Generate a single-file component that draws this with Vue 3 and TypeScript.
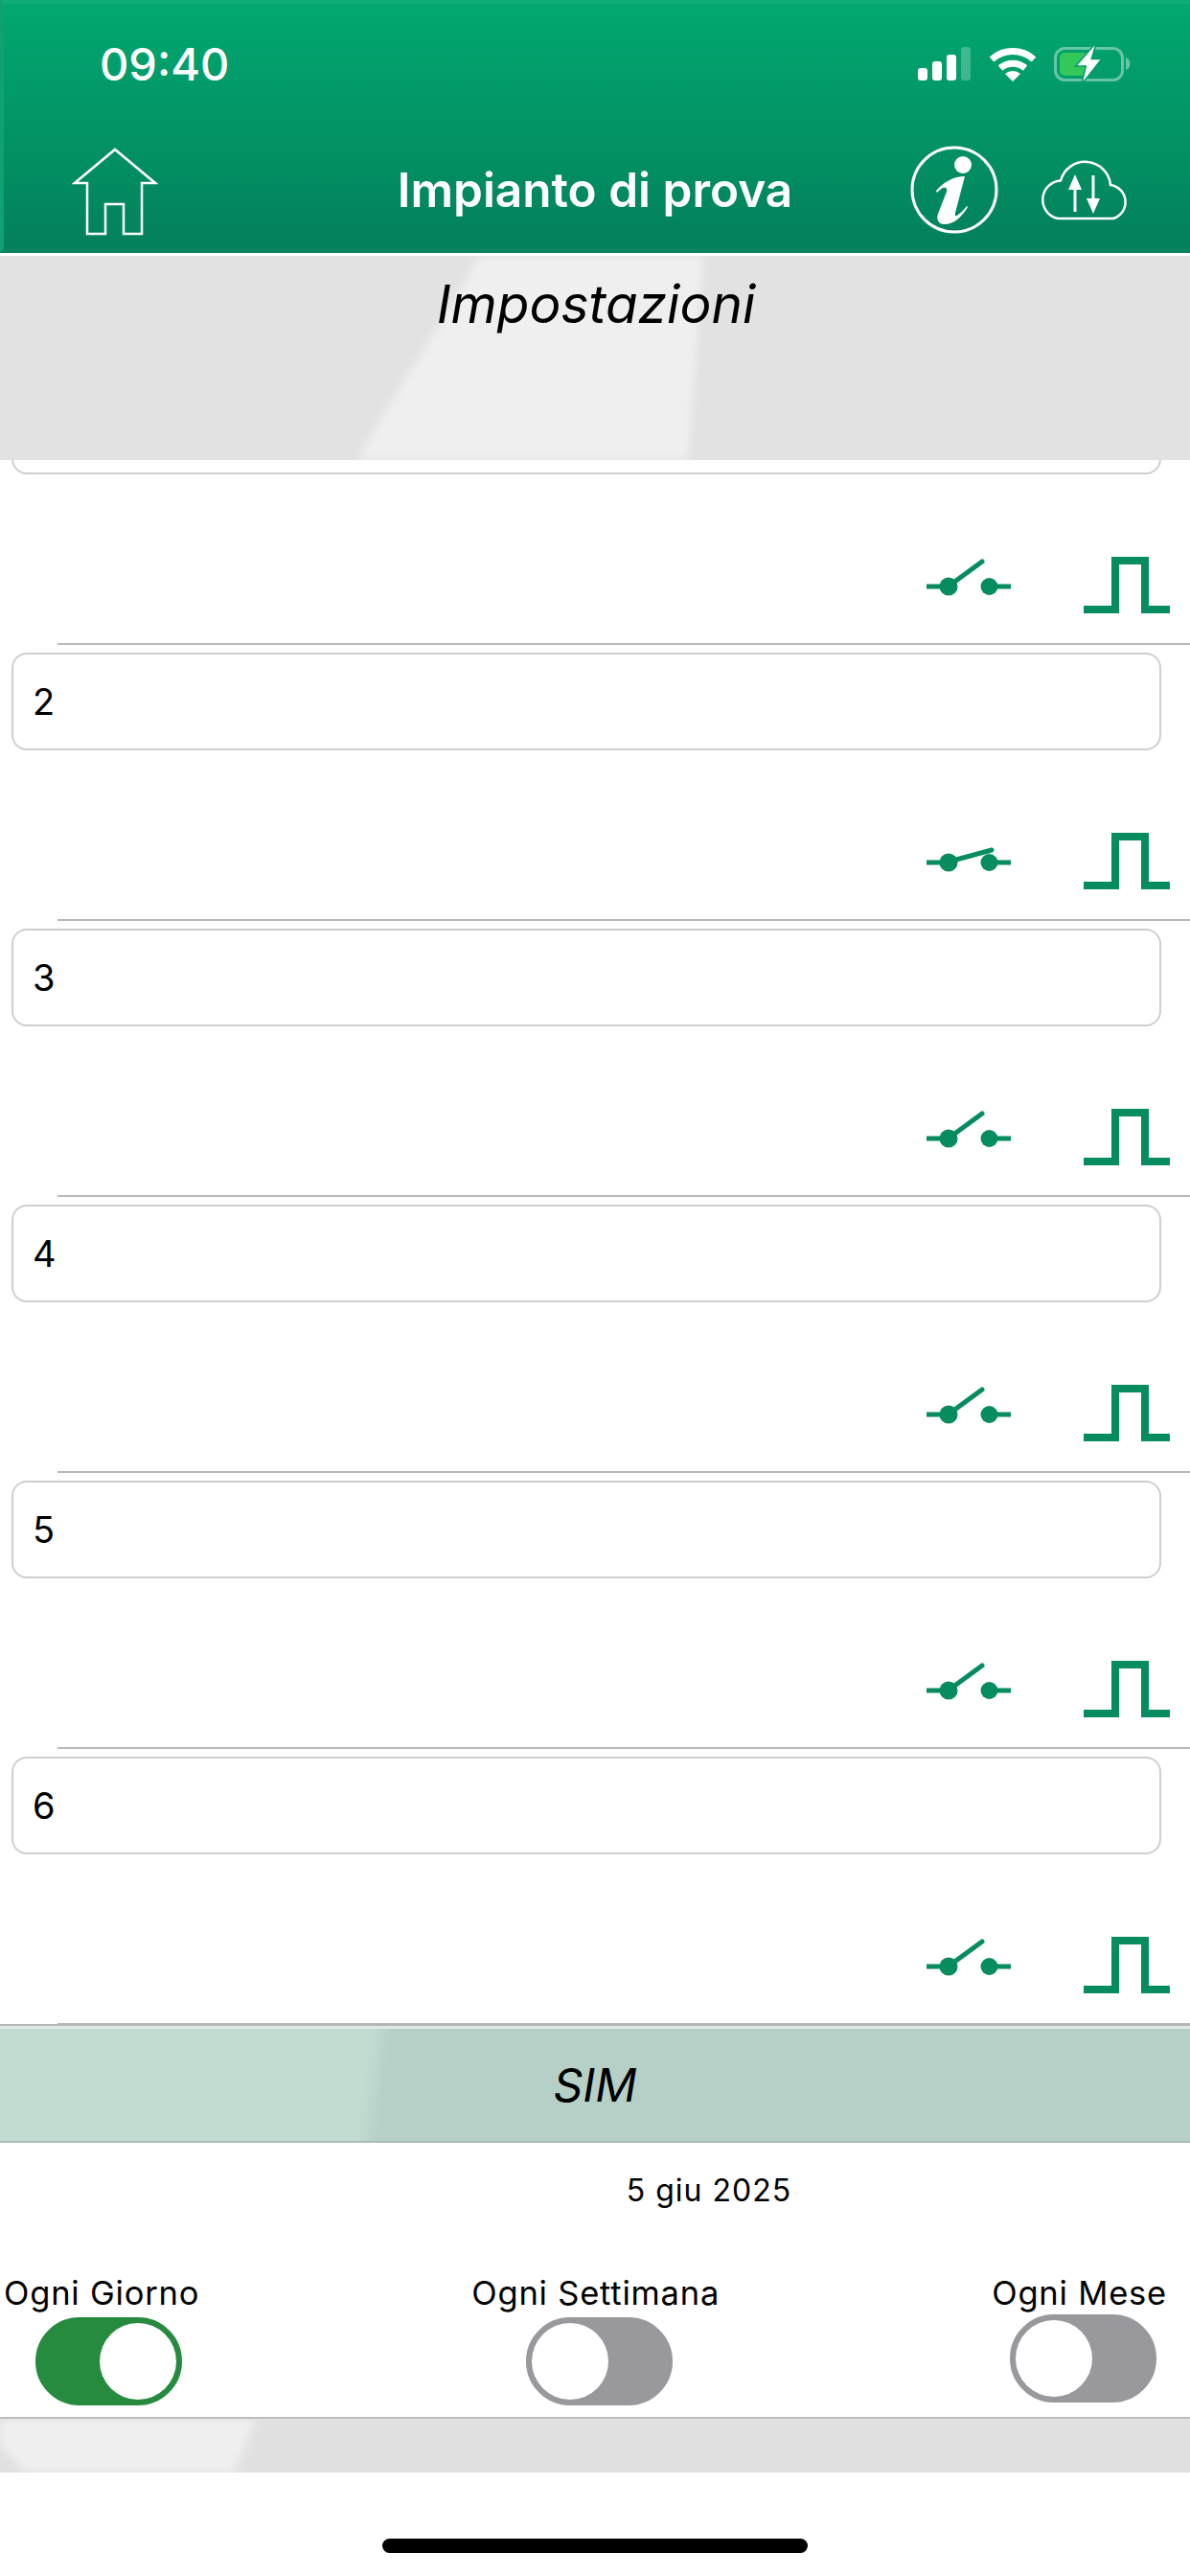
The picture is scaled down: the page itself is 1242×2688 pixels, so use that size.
<template>
  <div class="screen">
    <header class="topbar">
      <div class="status">
        <span class="clock">09:40</span>
        <svg class="status-icons" width="225" height="42" viewBox="0 0 225 42">
          <rect x="0" y="25" width="10" height="13" rx="3" fill="#fff" />
          <rect x="15" y="18" width="10" height="20" rx="3" fill="#fff" />
          <rect x="30" y="11" width="10" height="27" rx="3" fill="#fff" />
          <rect x="45" y="3" width="10" height="35" rx="3" fill="#fff" opacity="0.25" />
          <path d="M77 16a33 33 0 0 1 44 0" fill="none" stroke="#fff" stroke-width="7" />
          <path d="M86 25a20 20 0 0 1 26 0" fill="none" stroke="#fff" stroke-width="7" />
          <path d="M91 31a12 12 0 0 1 16 0l-8 8z" fill="#fff" />
          <rect x="143.500" y="4.500" width="70" height="33" rx="10" fill="none" stroke="#fff" stroke-opacity="0.4" stroke-width="3" />
          <path d="M217 14a7 7 0 0 1 0 13z" fill="#fff" opacity="0.4" />
          <rect x="148" y="9" width="30" height="24" rx="5" fill="#34c759" />
          <path d="M184.700 1.300 166.300 22.300h10l-4 16.700 18-22.700h-10z" fill="#fff" stroke="#029c6c" stroke-width="3" paint-order="stroke" />
        </svg>
      </div>
      <nav class="navbar">
        <svg class="home" width="90" height="94" viewBox="0 0 90 94">
          <path d="M3 38 45 3l42 35H73v53H54V60H35v31H16V38z" fill="none" stroke="#fff" stroke-width="2.500" />
        </svg>
        <h1 class="plant">Impianto di prova</h1>
        <div class="nav-actions">
          <svg width="92" height="92" viewBox="0 0 92 92">
            <circle cx="46" cy="46" r="44" fill="none" stroke="#fff" stroke-width="3" />
            <circle cx="55" cy="20" r="9" fill="#fff" />
            <path d="M27 47C35 38 45 32 57 32L47 70C46 74 48 74 50 72 53 70 56 67 59 63L60 64C54 74 46 82 36 82 29 82 27 77 29 71L38 48C39 44 37 43 34 44 32 45 30 47 28 49Z" fill="#fff" />
          </svg>
          <svg width="98" height="64" viewBox="0 0 98 64">
            <path d="M20 62a20 20 0 0 1 3-39.500A26.500 26.500 0 0 1 75 27a18 18 0 0 1 3 35z" fill="none" stroke="#fff" stroke-width="2.500" />
            <path d="M38 55V28M57 17v29" stroke="#fff" stroke-width="3" />
            <path d="M31 32 38 16l7 16zM50 41h14l-7 16z" fill="#fff" />
          </svg>
        </div>
      </nav>
    </header>

    <section class="title-band">
      <div class="sheen sheen--title"></div>
      <h2 class="section-title">Impostazioni</h2>
    </section>

    <main class="list">
      <div class="rows">
        <article v-for="row in rows" :key="row.id" class="row">
          <div class="field">{{ row.label }}</div>
          <div class="row-icons">
            <svg width="90" height="60" viewBox="0 0 90 60">
              <path d="M0 31h15M73 31h15" stroke="#068c5f" stroke-width="5" />
              <circle cx="23" cy="31" r="9.500" fill="#068c5f" />
              <circle cx="65.500" cy="31" r="9" fill="#068c5f" />
              <path :d="row.closed ? 'M31 28 68 18' : 'M28 27 58 5'" stroke="#068c5f" stroke-width="5" stroke-linecap="round" />
            </svg>
            <svg width="90" height="60" viewBox="0 0 90 60">
              <path d="M0 55h33V4h31v51h26" fill="none" stroke="#068c5f" stroke-width="8" />
            </svg>
          </div>
        </article>
      </div>
    </main>

    <section class="sim-band">
      <h2 class="sim-title">SIM</h2>
    </section>

    <section class="schedule">
      <p class="date">5 giu 2025</p>
      <div class="toggles">
        <div v-for="item in toggles" :key="item.label" :class="['toggle-item', `toggle-item--${item.id}`]">
          <span class="toggle-label">{{ item.label }}</span>
          <span :class="['toggle', { 'is-on': item.on }]"><i class="knob"></i></span>
        </div>
      </div>
    </section>

    <footer class="footer-bar">
      <div class="sheen sheen--footer"></div>
    </footer>
    <div class="home-area"><span class="home-indicator"></span></div>
  </div>
</template>

<script setup lang="ts">
interface Row {
  id: number
  label: string
  closed: boolean
}

// the first row is scrolled under the title band, its number is out of view
const rows: Row[] = [
  { id: 1, label: '', closed: false },
  { id: 2, label: '2', closed: true },
  { id: 3, label: '3', closed: false },
  { id: 4, label: '4', closed: false },
  { id: 5, label: '5', closed: false },
  { id: 6, label: '6', closed: false }
]

const toggles = [
  { id: 'day', label: 'Ogni Giorno', on: true },
  { id: 'week', label: 'Ogni Settimana', on: false },
  { id: 'month', label: 'Ogni Mese', on: false }
]
</script>

<style>
html,
body {
  margin: 0;
  background: #fff;
}
</style>

<style scoped>
.screen {
  width: 1242px;
  height: 2688px;
  display: flex;
  flex-direction: column;
  overflow: hidden;
  background: #fff;
  font-family: Inter, "Liberation Sans", sans-serif;
  color: #000;
}

.topbar {
  height: 264px;
  box-sizing: border-box;
  border-top: 4px solid #10ac78;
  border-bottom: 5px solid #0a8361;
  border-left: 4px solid #0fa172;
  background: linear-gradient(#02a870, #03805c);
  color: #fff;
}

.status {
  height: 106px;
  display: flex;
  justify-content: space-between;
  padding: 42px 59px 0 100px;
  box-sizing: border-box;
}

.clock {
  font-size: 47px;
  line-height: 42px;
  font-weight: 500;
}

.navbar {
  display: flex;
  align-items: flex-start;
  padding: 43px 60px 0 71px;
  position: relative;
}

.home {
  display: block;
}

.plant {
  position: absolute;
  left: -4px;
  right: 0;
  top: 58px;
  margin: 0;
  text-align: center;
  font-size: 49.500px;
  font-weight: 600;
  line-height: 60px;
}

.nav-actions {
  margin-left: auto;
  display: flex;
  gap: 42px;
  align-items: center;
  margin-top: -1px;
}

.title-band {
  position: relative;
  height: 213px;
  margin-top: 3px;
  background: #e2e2e2;
  text-align: center;
  overflow: hidden;
}

.sheen {
  position: absolute;
  filter: blur(5px);
}

.sheen::before {
  content: "";
  position: absolute;
  inset: 0;
  background: #efefef;
}

.sheen--title {
  inset: 0;
}

.sheen--title::before {
  clip-path: path("M510 -20C470 60 405 150 358 240H716L736 -20Z");
}

.section-title {
  position: relative;
  margin: 0;
  padding: 14px 0 0 2px;
  font-size: 55px;
  line-height: 72px;
  font-weight: 400;
  font-style: italic;
}

.list {
  flex: 1;
  min-height: 0;
  overflow: hidden;
}

.rows {
  margin-top: -87px;
}

.row {
  height: 288px;
  position: relative;
}

.row::after {
  content: "";
  position: absolute;
  left: 60px;
  right: 0;
  top: 278px;
  height: 2px;
  background: #b9b9b9;
}

.field {
  margin: 0 30px 0 12px;
  height: 102px;
  box-sizing: border-box;
  border: 2px solid #cfcfcf;
  border-radius: 16px;
  padding-left: 20px;
  font-size: 38px;
  line-height: 98px;
}

.row-icons {
  display: flex;
  justify-content: flex-end;
  gap: 74px;
  padding: 86px 21px 0 0;
}

.row-icons svg {
  display: block;
}

.sim-band {
  height: 124px;
  box-sizing: border-box;
  border-top: 2px solid #b5b5b5;
  border-bottom: 2px solid #a9bdb6;
  box-shadow: inset 0 3px 0 #dfe9e5;
  background: linear-gradient(97deg, #c2dcd2 0, #c2dcd2 384px, #b7d0c7 406px);
  text-align: center;
}

.sim-title {
  margin: 0;
  font-size: 48px;
  line-height: 123px;
  font-weight: 400;
  font-style: italic;
}

.schedule {
  height: 286px;
  box-sizing: border-box;
  position: relative;
}

.date {
  margin: 0;
  padding: 30px 0 0 238px;
  text-align: center;
  font-size: 32px;
  line-height: 40px;
  letter-spacing: 1px;
}

.toggles {
  display: flex;
  justify-content: space-between;
  padding: 66px 24px 0 4px;
}

.toggle-item {
  display: flex;
  flex-direction: column;
  align-items: center;
}

.toggle-label {
  font-size: 34.500px;
  line-height: 42px;
  letter-spacing: 0.800px;
  white-space: nowrap;
}

.toggle {
  margin-top: 4px;
  width: 153px;
  height: 92px;
  box-sizing: border-box;
  border: 6px solid #98989d;
  border-radius: 46px;
  background: #98989d;
  display: flex;
}

.toggle-item--day .toggle {
  margin-left: 14px;
}

.toggle-item--week .toggle {
  margin-left: 8px;
}

.toggle-item--month .toggle {
  margin-top: 1px;
  margin-left: 8px;
}

.toggle.is-on {
  border-color: #268b3f;
  background: #268b3f;
  justify-content: flex-end;
}

.knob {
  width: 80px;
  height: 80px;
  border-radius: 50%;
  background: #fff;
}

.footer-bar {
  position: relative;
  height: 58px;
  box-sizing: border-box;
  border-top: 2px solid #bdbdbd;
  background: #e1e1e1;
  overflow: hidden;
}

.sheen--footer {
  inset: 0;
}

.sheen--footer::before {
  clip-path: path("M-20 -20H272C262 20 250 40 240 70H40C20 50 5 30 -20 10Z");
}

.home-area {
  flex: none;
  height: 108px;
  display: flex;
  justify-content: center;
  padding-top: 69px;
  box-sizing: border-box;
}

.home-indicator {
  width: 444px;
  height: 15px;
  border-radius: 8px;
  background: #000;
}
</style>
